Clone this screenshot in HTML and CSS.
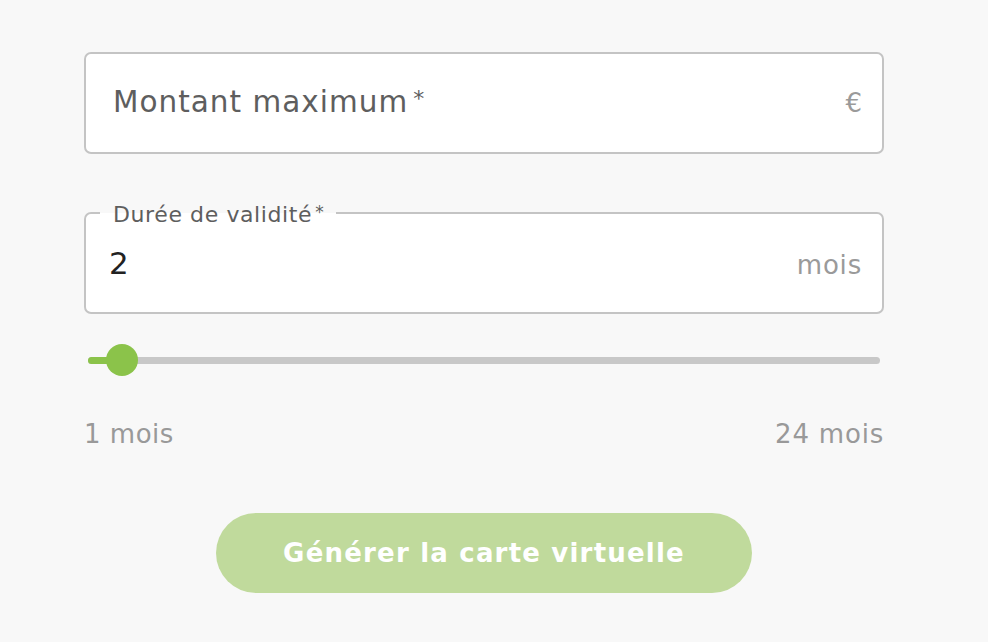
FILE: index.html
```html
<!DOCTYPE html>
<html lang="fr">
<head>
<meta charset="utf-8">
<link rel="stylesheet" href="styles.css">
</head>
<body>
<div class="form">
  <div class="field">
    <span class="placeholder">Montant maximum<span class="req">*</span></span>
    <span class="suffix euro">€</span>
  </div>
  <div class="field filled">
    <span class="legend">Durée de validité<span class="req">*</span></span>
    <span class="value">2</span>
    <span class="suffix">mois</span>
  </div>
  <div class="slider">
    <div class="track"><div class="fill" style="width:34px"></div></div>
    <div class="thumb" style="left:18px"></div>
  </div>
  <div class="range-labels">
    <span>1 mois</span>
    <span>24 mois</span>
  </div>
  <div class="actions">
    <button class="btn" disabled>Générer la carte virtuelle</button>
  </div>
</div>
</body>
</html>
```
FILE: styles.css
```css
html, body {
  margin: 0;
  padding: 0;
  background: #f8f8f8;
  font-family: "DejaVu Sans", "Noto Sans", sans-serif;
}
.form {
  width: 800px;
  margin-left: 84px;
  padding-top: 52px;
  display: flex;
  flex-direction: column;
}
.field {
  position: relative;
  box-sizing: border-box;
  height: 102px;
  background: #fff;
  border: 2px solid #c4c4c4;
  border-radius: 7px;
  display: flex;
  align-items: center;
  justify-content: space-between;
  padding: 0 20px 0 27px;
}
.field.filled {
  margin-top: 58px;
  padding-left: 23px;
}
.placeholder {
  font-size: 29.5px;
  color: #5e5e5e;
  letter-spacing: 1px;
  line-height: 1;
}
.req {
  font-size: 22px;
  vertical-align: 6px;
  margin-left: 5px;
  letter-spacing: 0;
}
.suffix {
  font-size: 26px;
  letter-spacing: 0.8px;
  color: #9a9a9a;
  padding-top: 4px;
}
.suffix.euro {
  font-size: 26px;
  padding-top: 0;
  letter-spacing: 0;
}
.value {
  font-size: 31px;
  color: #222;
}
.legend {
  position: absolute;
  left: 14px;
  top: -16px;
  padding: 0 12px 0 13px;
  background: linear-gradient(#f8f8f8 50%, #fff 50%);
  font-size: 22px;
  letter-spacing: 0.6px;
  color: #5e5e5e;
  line-height: 28px;
}
.legend .req {
  font-size: 17px;
  vertical-align: 4px;
  margin-left: 3px;
}
.slider {
  position: relative;
  height: 32px;
  margin-top: 30px;
  margin-left: 4px;
  margin-right: 4px;
  display: flex;
  align-items: center;
}
.track {
  flex: 1;
  height: 7px;
  border-radius: 4px;
  background: #c8c8c8;
  overflow: hidden;
}
.fill {
  height: 100%;
  background: #8bc34a;
}
.thumb {
  position: absolute;
  top: 0;
  width: 32px;
  height: 32px;
  border-radius: 50%;
  background: #8bc34a;
}
.range-labels {
  display: flex;
  justify-content: space-between;
  margin-top: 42px;
  font-size: 26px;
  letter-spacing: 0.5px;
  line-height: 32px;
  color: #999;
}
.range-labels span:last-child {
  letter-spacing: 0.8px;
}
.actions {
  display: flex;
  justify-content: center;
  margin-top: 63px;
}
.btn {
  width: 536px;
  height: 80px;
  border: none;
  border-radius: 40px;
  background: #c0da9c;
  color: #fff;
  font-family: "DejaVu Sans", "Noto Sans", sans-serif;
  font-weight: 700;
  font-size: 26px;
  letter-spacing: 1.2px;
  padding: 0;
}
```
